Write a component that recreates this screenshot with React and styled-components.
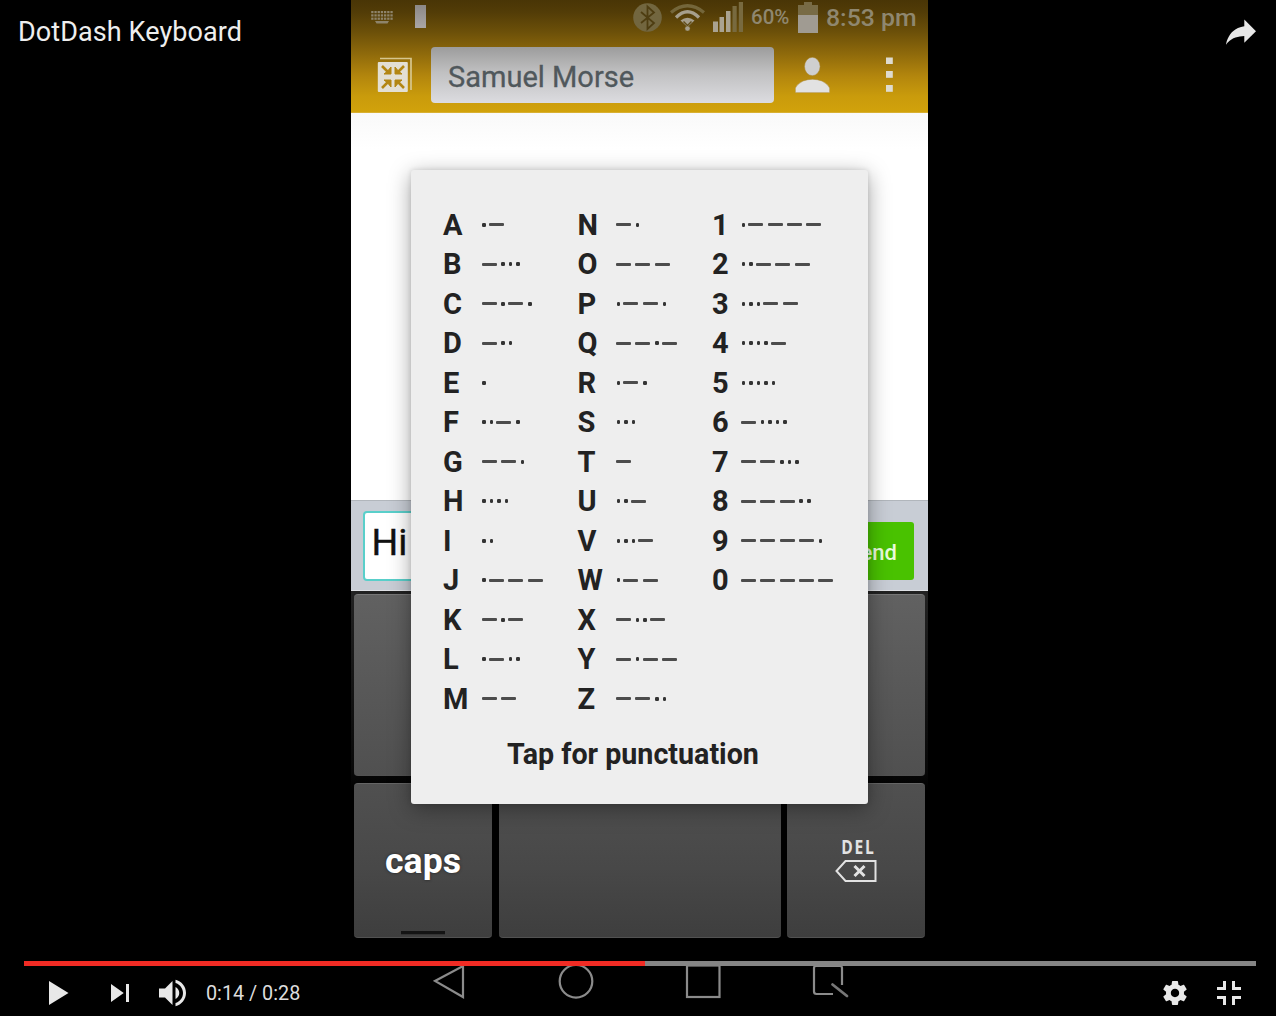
import React from "react";
import styled, { createGlobalStyle } from "styled-components";

const GlobalStyle = createGlobalStyle`
  * { box-sizing: border-box; }
  body { margin: 0; background: #000; font-family: Roboto, "Liberation Sans", sans-serif; }
  svg { display: block; flex: none; }
`;

/* ---------- Player shell ---------- */
const Player = styled.div`
  display: grid;
  grid-template: 1016px / 1276px;
  background: #000;
  overflow: hidden;
`;
const VideoLayer = styled.div`
  grid-area: 1 / 1;
  display: flex;
  padding-left: 351px;
`;
const ChromeLayer = styled.div`
  grid-area: 1 / 1;
  z-index: 2;
  display: flex;
  flex-direction: column;
  height: 1020px;
  color: #eee;
`;
const TitleBar = styled.header`
  display: flex;
  justify-content: space-between;
  padding: 5px 8px 0 18px;
`;
const Title = styled.h1`
  margin: 0;
  font-size: 27px;
  font-weight: 400;
  line-height: 55px;
  height: 54px;
  white-space: nowrap;
  letter-spacing: 0.08px;
`;
const Controls = styled.footer`
  margin-top: auto;
`;
const Track = styled.div`
  height: 5px;
  margin: 0 20px 0 24px;
  background: #858585;
`;
const Played = styled.div`
  height: 100%;
  background: #f12b24;
`;
const ControlRow = styled.div`
  display: flex;
  height: 54px;
  padding: 0 20px 0 31px;
`;
const IconButton = styled.button`
  width: 54px;
  height: 54px;
  padding: 0;
  border: 0;
  background: none;
  margin-right: ${(p) => p.$gap || 0}px;
`;
const Time = styled.div`
  height: 54px;
  margin: 0 auto 0 5px;
  font-size: 19.8px;
  line-height: 56px;
  color: #ddd;
`;

/* ---------- Phone ---------- */
const Phone = styled.main`
  position: relative;
  display: flex;
  flex-direction: column;
  width: 577px;
  height: 1016px;
  background: #000;
`;
const Header = styled.div`
  height: 113px;
  background: linear-gradient(#493506 0, #523c07 12px, #6c5009 32px, #8f6a0b 54px, #b3860d 76px, #c99b0c 96px, #d1a20b 112px, #dfbd58 113px);
`;
const StatusBar = styled.div`
  display: flex;
  align-items: center;
  height: 34px;
  padding: 0 12px 0 20px;
  color: #8f876f;
`;
const Notch = styled.div`
  width: 11px;
  height: 23px;
  margin: -2px auto 0 22px;
  background: linear-gradient(#8c8886, #aaa6a6);
`;
const StatusText = styled.span`
  font-size: ${(p) => p.$size}px;
  width: ${(p) => p.$width}px;
  line-height: 35px;
  font-weight: 500;
  white-space: nowrap;
`;
const Spacer = styled.span`
  flex: none;
  width: ${(p) => p.$w}px;
`;
const AppBar = styled.div`
  display: flex;
  align-items: center;
  height: 79px;
  padding: 4px 32px 2px 26px;
`;
const Recipient = styled.div`
  width: 343px;
  height: 56px;
  margin: 0 21px 0 19px;
  padding-left: 17px;
  border-radius: 4px;
  background: linear-gradient(#9c9c9c, #c0c0c1 45%, #dcdce0);
  color: #50585c;
  font-size: 29px;
  line-height: 60px;
  -webkit-text-stroke: 0.3px #50585c;
`;
const Thread = styled.div`
  height: 387px;
  background: linear-gradient(#f9f9f9, #fff 36px);
`;
const Compose = styled.div`
  display: flex;
  justify-content: space-between;
  height: 91px;
  padding: 10px 14px 10px 11.5px;
  border-top: 1px solid #b1b6bc;
  border-bottom: 1px solid #dfe1e5;
  background: #c8cdd5;
`;
const Message = styled.div`
  width: 440px;
  height: 70px;
  padding-left: 7px;
  border: 2.5px solid #59cfca;
  border-radius: 4px;
  background: #fff;
  color: #111;
  font-size: 37.5px;
  line-height: 59px;
  -webkit-text-stroke: 0.4px #111;
`;
const Send = styled.button`
  width: 84px;
  height: 58px;
  margin-top: 11px;
  padding: 3px 17px 0 0;
  border: 0;
  border-radius: 3px;
  background: #49c200;
  color: #e9fbdc;
  font: 500 22px/1 Roboto, "Liberation Sans", sans-serif;
  text-align: right;
`;
const Keyboard = styled.div`
  display: grid;
  grid-template: 182px 155px / 138px 282px 138px;
  gap: 7px 6.5px;
  height: 349px;
  padding: 3px 3px 0;
  background: linear-gradient(#222, #080808 180px, #000 200px);
`;
const Key = styled.div`
  display: flex;
  flex-direction: column;
  align-items: center;
  justify-content: center;
  grid-column: span ${(p) => p.$span || 1};
  border-radius: 4px;
  border-top: 1px solid ${(p) => (p.$upper ? "#777" : "#656565")};
  border-bottom: 1px solid #525252;
  background: ${(p) =>
    p.$upper ? "linear-gradient(#616161, #505050)" : "linear-gradient(#505050, #484848 55%, #3e3e3e)"};
`;
const CapsLabel = styled.span`
  margin-top: 45px;
  color: #fff;
  font-size: 35.6px;
  font-weight: 700;
  line-height: 60px;
  text-shadow: 0 0 3px #222;
`;
const CapsMark = styled.span`
  width: 44px;
  height: 4px;
  margin-top: 40px;
  background: #141414;
  border-bottom: 1px solid #333;
`;
const DeleteFace = styled.div`
  display: flex;
  flex-direction: column;
  align-items: center;
  padding-bottom: 3px;
`;
const DelLabel = styled.span`
  margin: 0 0 3px 5px;
  color: #e2e2e2;
  font-family: "Open Sans", "Noto Sans", sans-serif;
  font-size: 19.5px;
  font-weight: 700;
  line-height: 20px;
  letter-spacing: 2.2px;
  transform: scaleX(0.8);
`;
const NavBar = styled.nav`
  display: flex;
  height: 76px;
  padding: 23px 0 0 82px;
`;

/* ---------- Chart popup ---------- */
const Popup = styled.section`
  position: absolute;
  left: 60px;
  top: 170px;
  width: 457px;
  height: 634px;
  padding: 35px 0 0 32px;
  border-radius: 3px;
  background: #eee;
  box-shadow: 0 5px 22px rgba(0, 0, 0, 0.36), 0 0 5px rgba(0, 0, 0, 0.12);
  color: #222;
`;
const Chart = styled.div`
  display: grid;
  grid-template-columns: 134.5px 134.5px 140px;
`;
const Entry = styled.div`
  display: flex;
  align-items: center;
  height: 39.5px;
`;
const Letter = styled.b`
  width: ${(p) => p.$width}px;
  padding-top: 1px;
  font-size: 29px;
  line-height: 39px;
`;
const Code = styled.span`
  display: flex;
  align-items: center;
  height: 4px;
`;
const Signal = styled.i`
  width: ${(p) => (p.$long ? 15 : 3.6)}px;
  height: ${(p) => (p.$long ? 2.6 : 3.6)}px;
  margin: ${(p) => (p.$long ? "0 4.3px 0 0" : "0 3.3px 0 0.6px")};
  border-radius: ${(p) => (p.$long ? 1 : 1.3)}px;
  background: ${(p) => (p.$long ? "#4c4c4c" : "#333")};
`;
const PopupAction = styled.div`
  margin: 18px 0 0 64px;
  font-size: 28.65px;
  font-weight: 700;
  line-height: 34px;
  white-space: nowrap;
`;

const columns = [
  { width: 38.5, rows: "A.- B-... C-.-. D-.. E. F..-. G--. H.... I.. J.--- K-.- L.-.. M--" },
  { width: 38.5, rows: "N-. O--- P.--. Q--.- R.-. S... T- U..- V...- W.-- X-..- Y-.-- Z--.." },
  { width: 29, rows: "1.---- 2..--- 3...-- 4....- 5..... 6-.... 7--... 8---.. 9----. 0-----" },
];

const GlyphSvg = ({ children }) => (
  <svg width="54" height="54" viewBox="0 0 36 36" fill="#e8e8e8">{children}</svg>
);

const KeyboardIcon = () => (
  <svg width="22" height="13" viewBox="0 0 22 13" fill="#8e846b">
    {[0, 3.2, 6.4, 9.6, 12.8, 16, 19.2].map((x) => (
      <React.Fragment key={x}>
        <rect x={x + 0.2} y="0" width="2.3" height="2.2" />
        <rect x={x + 0.2} y="3.3" width="2.3" height="2.2" />
        <rect x={x + 0.2} y="6.6" width="2.3" height="2.2" />
      </React.Fragment>
    ))}
    <path d="M4 10h14l-1.5 2.4h-11z" />
  </svg>
);
const BluetoothIcon = () => (
  <svg width="30" height="30" viewBox="0 0 30 30">
    <circle cx="14.500" cy="15.500" r="14.3" fill="#72663f" />
    <path d="M8 10l13 11-6.500 6V4.500l6.500 6L8 21" fill="none" stroke="#4e3d11" strokeWidth="1.8" />
  </svg>
);
const WifiIcon = () => (
  <svg width="36" height="28" viewBox="0 0 36 28" fill="none" strokeWidth="3.2">
    <path d="M1 9.500Q17.500-4 34 9.500" stroke="#74663a" />
    <path d="M6 14.500Q17.500 3 29 14.500" stroke="#a69f8c" />
    <path d="M10.500 17.500Q17.500 12 24.500 17.500L17.500 24z" fill="#a69f8c" />
    <path d="M13.500 18.500L17.500 22.500L21.500 18.500" stroke="#604d19" strokeWidth="1.5" />
    <circle cx="17.500" cy="25.500" r="2.6" fill="#a69f8c" stroke="#6b5313" strokeWidth="0.500" />
  </svg>
);
const SignalIcon = () => (
  <svg width="30" height="30" viewBox="0 0 30 30" fill="#aaa391">
    <rect x="0" y="19.500" width="5" height="10.500" />
    <rect x="6.500" y="15" width="4.500" height="15" />
    <rect x="13" y="9" width="4.500" height="21" />
    <rect x="19.500" y="4" width="4.200" height="26" fill="#786a3f" />
    <rect x="25.800" y="0" width="4.200" height="30" fill="#786a3f" />
  </svg>
);
const BatteryIcon = () => (
  <svg width="20" height="31" viewBox="0 0 20 31">
    <path d="M6 0h8v3h6v11H0V3h6z" fill="#786b45" />
    <path d="M0 13h20v18H0z" fill="#a09b92" />
  </svg>
);
const CollapseIcon = () => (
  <svg width="35" height="36" viewBox="0 0 35 36">
    <path d="M3 1.500h31V33" fill="none" stroke="#d6c68f" strokeWidth="1.700" />
    <rect x="0.800" y="5" width="30" height="30" rx="1" fill="#e3dfd3" />
    <g stroke="#b38613" strokeWidth="2.600" fill="#b38613">
      <path d="M5 9l6 6M27 9l-6 6M5 31l6-6M27 31l-6-6" />
      <path d="M14 10v7H7l3.500-2.800zM18 10v7h7l-3.500-2.800zM14 30v-7H7l3.500 2.800zM18 30v-7h7l-3.500 2.800z" strokeWidth="1" />
    </g>
  </svg>
);
const PersonIcon = () => (
  <svg width="35" height="36" viewBox="0 0 35 36" fill="#dcdcdc" stroke="#a9822b" strokeWidth="0.500">
    <ellipse cx="17.300" cy="9.500" rx="7.800" ry="9.200" fill="#cfcfcf" />
    <path d="M0.300 35.700V31Q2 27 8 24Q17.500 20.500 27 24Q33 27 34.700 31v4.700z" fill="#e2e2e2" />
  </svg>
);
const MenuIcon = () => (
  <svg width="7" height="35" viewBox="0 0 7 35" fill="#dedbd0">
    <rect y="0.500" width="6.800" height="6.500" />
    <rect y="14" width="6.800" height="6.800" />
    <rect y="28" width="6.800" height="6.800" />
  </svg>
);
const DeleteIcon = () => (
  <svg width="42" height="22" viewBox="0 0 42 22" fill="none" stroke="#e2e2e2" strokeWidth="2">
    <path d="M10.500 1H40.500V21H10.500L1.500 11z" />
    <path d="M19.500 6l10 10m0-10l-10 10" strokeWidth="3" />
  </svg>
);
const NavIcons = () => (
  <svg width="416" height="38" viewBox="0 0 416 38" fill="none" stroke="#8b8b8b" strokeWidth="2.2">
    <path d="M30 3V34L2 18z" />
    <circle cx="143" cy="18.300" r="16.300" />
    <rect x="254" y="2.500" width="32.500" height="31.500" />
    <path d="M409 22V5Q409 3 407 3H383Q381 3 381 5V28.500Q381 31 383.500 31H400" />
    <path d="M399.500 21.500L414 33" strokeWidth="2.800" stroke="#777" strokeLinecap="round" />
  </svg>
);

export default function App() {
  return (
    <>
      <GlobalStyle />
      <Player>
        <VideoLayer>
          <Phone>
            <Header>
              <StatusBar>
                <KeyboardIcon />
                <Notch />
                <BluetoothIcon />
                <Spacer $w={7} />
                <WifiIcon />
                <Spacer $w={7} />
                <SignalIcon />
                <Spacer $w={8} />
                <StatusText $size={20.5} $width={47}>60%</StatusText>
                <BatteryIcon />
                <Spacer $w={8} />
                <StatusText $size={24.8} $width={90}>8:53 pm</StatusText>
              </StatusBar>
              <AppBar>
                <CollapseIcon />
                <Recipient>Samuel Morse</Recipient>
                <PersonIcon />
                <Spacer $w={56} />
                <MenuIcon />
              </AppBar>
            </Header>
            <Thread />
            <Compose>
              <Message>Hi</Message>
              <Send>Send</Send>
            </Compose>
            <Keyboard>
              <Key $upper $span={3} />
              <Key>
                <CapsLabel>caps</CapsLabel>
                <CapsMark />
              </Key>
              <Key />
              <Key>
                <DeleteFace>
                  <DelLabel>DEL</DelLabel>
                  <DeleteIcon />
                </DeleteFace>
              </Key>
            </Keyboard>
            <NavBar><NavIcons /></NavBar>
            <Popup>
              <Chart>
                {columns.map((col) => (
                  <div key={col.rows}>
                    {col.rows.split(" ").map((row) => (
                      <Entry key={row}>
                        <Letter $width={col.width}>{row[0]}</Letter>
                        <Code>
                          {[...row.slice(1)].map((s, i) => <Signal key={i} $long={s === "-"} />)}
                        </Code>
                      </Entry>
                    ))}
                  </div>
                ))}
              </Chart>
              <PopupAction>Tap for punctuation</PopupAction>
            </Popup>
          </Phone>
        </VideoLayer>
        <ChromeLayer>
          <TitleBar>
            <Title>DotDash Keyboard</Title>
            <IconButton aria-label="Share">
              <GlyphSvg>
                <path d="m 20.20,14.19 0,-4.45 7.79,7.79 -7.79,7.62 0,-4.56 C 16.27,20.69 12.10,21.81 9.34,24.76 8.80,25.13 7.60,27.29 8.12,25.65 9.08,21.32 11.80,17.18 15.98,15.38 c 1.33,-0.60 2.76,-0.98 4.21,-1.19 z" />
              </GlyphSvg>
            </IconButton>
          </TitleBar>
          <Controls>
            <Track><Played style={{ width: `${(621 / 1232) * 100}%` }} /></Track>
            <ControlRow>
              <IconButton $gap={8} aria-label="Play">
                <GlyphSvg><path d="M12 26L25 18 12 10z" /></GlyphSvg>
              </IconButton>
              <IconButton aria-label="Next">
                <GlyphSvg><path d="M12 24L20.500 18 12 12zM22 12v12h2V12z" /></GlyphSvg>
              </IconButton>
              <IconButton aria-label="Volume">
                <GlyphSvg>
                  <path d="M8 21h4l5 5V10l-5 5H8zM19 14v8c1.480-.680 2.500-2.230 2.500-4s-1.020-3.260-2.500-4zM19 11.290c2.890.860 5 3.540 5 6.710s-2.110 5.850-5 6.710v2.060c4.010-.910 7-4.490 7-8.770s-2.990-7.860-7-8.770z" />
                </GlyphSvg>
              </IconButton>
              <Time>0:14 / 0:28</Time>
              <IconButton aria-label="Settings">
                <GlyphSvg>
                  <path d="m 23.94,18.78 c .03,-0.25 .05,-0.51 .05,-0.78 0,-0.27 -0.02,-0.52 -0.05,-0.78 l 1.68,-1.32 c .15,-0.12 .19,-0.33 .09,-0.51 l -1.6,-2.76 c -0.09,-0.17 -0.31,-0.24 -0.48,-0.17 l -1.99,.8 c -0.41,-0.32 -0.86,-0.58 -1.35,-0.78 l -0.30,-2.12 c -0.02,-0.19 -0.19,-0.33 -0.39,-0.33 l -3.2,0 c -0.2,0 -0.36,.14 -0.39,.33 l -0.30,2.12 c -0.48,.2 -0.93,.47 -1.35,.78 l -1.99,-0.8 c -0.18,-0.07 -0.39,0 -0.48,.17 l -1.6,2.76 c -0.10,.17 -0.05,.39 .09,.51 l 1.68,1.32 c -0.03,.25 -0.05,.52 -0.05,.78 0,.26 .02,.52 .05,.78 l -1.68,1.32 c -0.15,.12 -0.19,.33 -0.09,.51 l 1.6,2.76 c .09,.17 .31,.24 .48,.17 l 1.99,-0.8 c .41,.32 .86,.58 1.35,.78 l .30,2.12 c .02,.19 .19,.33 .39,.33 l 3.2,0 c .2,0 .36,-0.14 .39,-0.33 l .30,-2.12 c .48,-0.2 .93,-0.47 1.35,-0.78 l 1.99,.8 c .18,.07 .39,0 .48,-0.17 l 1.6,-2.76 c .09,-0.17 .05,-0.39 -0.09,-0.51 l -1.68,-1.32 z m -5.94,2.01 c -1.54,0 -2.8,-1.25 -2.8,-2.8 0,-1.54 1.25,-2.8 2.8,-2.8 1.54,0 2.8,1.25 2.8,2.8 0,1.54 -1.25,2.8 -2.8,2.8 z" />
                </GlyphSvg>
              </IconButton>
              <IconButton aria-label="Exit full screen">
                <GlyphSvg><path d="M14 14h-4v2h6v-6h-2zM22 14v-4h-2v6h6v-2zM20 26h2v-4h4v-2h-6zM10 22h4v4h2v-6h-6z" /></GlyphSvg>
              </IconButton>
            </ControlRow>
          </Controls>
        </ChromeLayer>
      </Player>
    </>
  );
}
